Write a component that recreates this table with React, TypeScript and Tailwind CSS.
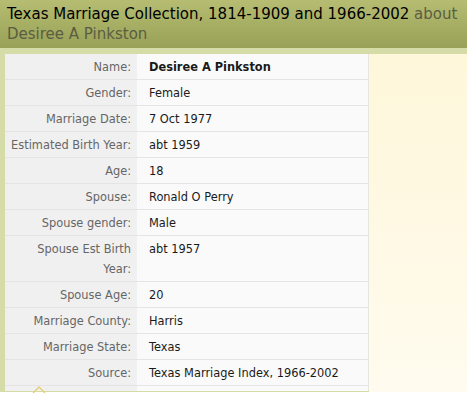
const rows: { label: string; value: string; bold?: boolean }[] = [
  { label: "Name:", value: "Desiree A Pinkston", bold: true },
  { label: "Gender:", value: "Female" },
  { label: "Marriage Date:", value: "7 Oct 1977" },
  { label: "Estimated Birth Year:", value: "abt 1959" },
  { label: "Age:", value: "18" },
  { label: "Spouse:", value: "Ronald O Perry" },
  { label: "Spouse gender:", value: "Male" },
  { label: "Spouse Est Birth Year:", value: "abt 1957" },
  { label: "Spouse Age:", value: "20" },
  { label: "Marriage County:", value: "Harris" },
  { label: "Marriage State:", value: "Texas" },
  { label: "Source:", value: "Texas Marriage Index, 1966-2002" },
]

export default function App() {
  return (
    <div className="w-[467px] h-[401px] overflow-hidden bg-white font-['DejaVu_Sans',Verdana,sans-serif]">
      <div className="h-[48px] px-[7px] pt-[4px] bg-gradient-to-b from-[#b6bd72] to-[#98a157] text-[15px] leading-[20px] text-black">
        <span>Texas Marriage Collection, 1814-1909 and 1966-2002 </span>
        <span className="text-[#5a5d42]">about Desiree A Pinkston</span>
      </div>
      <div className="flex h-[344px] bg-[#d6dca8] pt-[6px] pl-[5px]">
        <div className="w-[364px] self-start bg-[#fafafa] border-r border-[#e6e6e0]">
          {rows.map((r) => (
            <div key={r.label} className="flex border-b border-[#e4e4e4] text-[11.4px] leading-[20px]">
              <div className="w-[132px] shrink-0 bg-[#f0f0f0] text-right text-[#666] pl-[4px] pr-[6px] pt-[3px] pb-[2px]">
                {r.label}
              </div>
              <div className={"pl-[12px] pt-[3px] pb-[2px] text-[#1a1a1a] " + (r.bold ? "font-bold" : "")}>
                {r.value}
              </div>
            </div>
          ))}
          <div className="flex h-[5px]">
            <div className="w-[132px] bg-[#f0f0f0] relative">
              <svg className="absolute left-[27px] top-[0px]" width="14" height="8" viewBox="0 0 14 8">
                <path d="M1 7 L7 1 L13 7" fill="none" stroke="#e3cf74" strokeWidth="1.3" />
              </svg>
            </div>
          </div>
        </div>
        <div className="flex-1 self-stretch bg-gradient-to-b from-[#fef7da] to-[#fffbee]" />
      </div>
    </div>
  )
}
